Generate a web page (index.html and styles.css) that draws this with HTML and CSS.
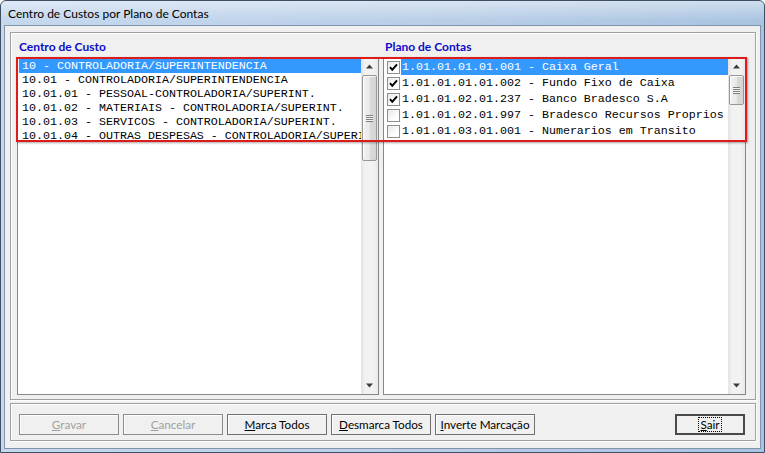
FILE: index.html
```html
<!DOCTYPE html>
<html>
<head>
<meta charset="utf-8">
<title>Centro de Custos por Plano de Contas</title>
<link rel="stylesheet" href="styles.css">
</head>
<body>
<div class="window">
  <div class="titlebar"><span class="title">Centro de Custos por Plano de Contas</span></div>
  <div class="client">
    <div class="group lists">
      <div class="panel">
        <div class="caption">Centro de Custo</div>
        <div class="listbox">
          <ul class="items plain">
            <li><span class="txt sel">10 - CONTROLADORIA/SUPERINTENDENCIA</span></li>
            <li><span class="txt">10.01 - CONTROLADORIA/SUPERINTENDENCIA</span></li>
            <li><span class="txt">10.01.01 - PESSOAL-CONTROLADORIA/SUPERINT.</span></li>
            <li><span class="txt">10.01.02 - MATERIAIS - CONTROLADORIA/SUPERINT.</span></li>
            <li><span class="txt">10.01.03 - SERVICOS - CONTROLADORIA/SUPERINT.</span></li>
            <li><span class="txt">10.01.04 - OUTRAS DESPESAS - CONTROLADORIA/SUPERINT.</span></li>
          </ul>
          <div class="vscroll">
            <div class="arrow"><svg width="17" height="17" viewBox="0 0 17 17"><path d="M5 10.5 L8.5 6.5 L12 10.5 Z" fill="#3c3c3c"/></svg></div>
            <div class="track"><div class="thumb" style="height:86px"><span class="grip"></span></div></div>
            <div class="arrow"><svg width="17" height="17" viewBox="0 0 17 17"><path d="M5 6.5 L8.5 10.5 L12 6.5 Z" fill="#3c3c3c"/></svg></div>
          </div>
        </div>
      </div>
      <div class="panel">
        <div class="caption">Plano de Contas</div>
        <div class="listbox">
          <ul class="items checks">
            <li><span class="cb on"><svg width="11" height="11" viewBox="0 0 11 11"><path d="M2 5.2 L4.3 7.8 L9 2.4" fill="none" stroke="#000" stroke-width="2"/></svg></span><span class="txt sel">1.01.01.01.01.001 - Caixa Geral</span></li>
            <li><span class="cb on"><svg width="11" height="11" viewBox="0 0 11 11"><path d="M2 5.2 L4.3 7.8 L9 2.4" fill="none" stroke="#000" stroke-width="2"/></svg></span><span class="txt">1.01.01.01.01.002 - Fundo Fixo de Caixa</span></li>
            <li><span class="cb on"><svg width="11" height="11" viewBox="0 0 11 11"><path d="M2 5.2 L4.3 7.8 L9 2.4" fill="none" stroke="#000" stroke-width="2"/></svg></span><span class="txt">1.01.01.02.01.237 - Banco Bradesco S.A</span></li>
            <li><span class="cb"></span><span class="txt">1.01.01.02.01.997 - Bradesco Recursos Proprios</span></li>
            <li><span class="cb"></span><span class="txt">1.01.01.03.01.001 - Numerarios em Transito</span></li>
          </ul>
          <div class="vscroll">
            <div class="arrow"><svg width="17" height="17" viewBox="0 0 17 17"><path d="M5 10.5 L8.5 6.5 L12 10.5 Z" fill="#3c3c3c"/></svg></div>
            <div class="track"><div class="thumb" style="height:30px"><span class="grip"></span></div></div>
            <div class="arrow"><svg width="17" height="17" viewBox="0 0 17 17"><path d="M5 6.5 L8.5 10.5 L12 6.5 Z" fill="#3c3c3c"/></svg></div>
          </div>
        </div>
      </div>
    </div>
    <div class="group actions">
      <button class="btn disabled"><u>G</u>ravar</button>
      <button class="btn disabled"><u>C</u>ancelar</button>
      <button class="btn"><u>M</u>arca Todos</button>
      <button class="btn"><u>D</u>esmarca Todos</button>
      <button class="btn"><u>I</u>nverte Marcação</button>
      <button class="btn default"><span class="focus"><u>S</u>air</span></button>
    </div>
  </div>
  <div class="mark"></div>
</div>
</body>
</html>
```
FILE: styles.css
```css
* { box-sizing: border-box; }
html, body { margin: 0; padding: 0; background: #ffffff; }

.window {
  position: relative;
  width: 765px;
  height: 453px;
  border: 1px solid #3f4f63;
  border-radius: 6px 6px 0 0;
  background: linear-gradient(to right, #c5d8ee, #b8cee7 60%, #a9c3e0);
  padding: 0 3px 3px 3px;
  display: flex;
  flex-direction: column;
  font-family: Lato, "Noto Sans", sans-serif;
  overflow: hidden;
}

.titlebar {
  height: 25px;
  margin: 0 -3px;
  padding-left: 7px;
  display: flex;
  align-items: center;
  font-size: 12px;
  color: #000;
  background: linear-gradient(to bottom, rgba(255,255,255,0.45), rgba(255,255,255,0) 85%);
}

.client {
  flex: 1;
  background: #f0f0f0;
  border: 1px solid #8294ab;
  padding: 6px 4px 7px 5px;
  display: flex;
  flex-direction: column;
  gap: 3px;
}

.group {
  border: 1px solid #a0a0a0;
  box-shadow: inset 1px 1px 0 #ffffff, 1px 1px 0 #ffffff;
}

.lists {
  height: 368px;
  padding: 7px 9px 4px 6px;
  display: grid;
  grid-template-columns: 362px 363px;
  column-gap: 4px;
}

.panel { display: flex; flex-direction: column; }

.caption {
  height: 14px;
  line-height: 14px;
  margin-bottom: 3px;
  padding-left: 2px;
  font-weight: bold;
  font-size: 12px;
  color: #0c0cc8;
}

.listbox {
  height: 338px;
  border: 1px solid #828790;
  background: #ffffff;
  display: flex;
}

.items {
  flex: 1;
  min-width: 0;
  list-style: none;
  margin: 0;
  padding: 1px 0 0 1px;
  overflow: hidden;
  font-family: "Liberation Mono", "Courier New", monospace;
  font-size: 11.67px;
  color: #000;
}

.items li { white-space: nowrap; overflow: hidden; }

.plain li { height: 14px; line-height: 14px; }
.plain .txt { display: block; padding-left: 3px; }

.checks li { height: 16px; line-height: 16px; display: flex; align-items: center; }
.checks .txt { flex: 1; padding-left: 1px; overflow: hidden; }

.sel { background: #3399ff; color: #ffffff; }

.cb {
  flex: none;
  width: 13px;
  height: 13px;
  margin: 0 1px 0 2px;
  border: 1px solid #8f8f8f;
  background: linear-gradient(135deg, #e8e8e8, #ffffff 70%);
  display: flex;
  align-items: center;
  justify-content: center;
}
.cb svg { display: block; }

.vscroll {
  flex: none;
  width: 17px;
  display: flex;
  flex-direction: column;
  background: linear-gradient(to right, #e3e3e3, #f2f2f2 25%, #f2f2f2 75%, #e8e8e8);
}
.arrow { height: 17px; flex: none; }
.arrow svg { display: block; }
.track { flex: 1; padding: 0 1px; }
.thumb {
  border: 1px solid #979797;
  border-radius: 2px;
  background: linear-gradient(to right, #f3f3f3, #e8e8e8 50%, #dadada 51%, #d4d4d4);
  box-shadow: inset 1px 1px 0 rgba(255,255,255,0.8);
  display: flex;
  align-items: center;
  justify-content: center;
}
.grip {
  width: 7px;
  height: 7px;
  background: repeating-linear-gradient(to bottom, #7e7e7e 0, #7e7e7e 1px, #f4f4f4 1px, #f4f4f4 2px);
}

.actions {
  height: 38px;
  padding: 10px 10px 5px 8px;
  display: flex;
  gap: 4px;
}

.btn {
  width: 100px;
  height: 21px;
  padding: 0;
  border: 1px solid #707070;
  background: #f0f0f0;
  box-shadow: inset 1px 1px 0 #fcfcfc;
  font-family: Lato, "Noto Sans", sans-serif;
  font-size: 11.7px;
  color: #000;
  line-height: 17px;
}
.btn.disabled { color: #a0a0a0; border-color: #8c8c8c; }
.btn.default {
  width: 70px;
  margin-left: auto;
  border: 2px solid #4a4a4a;
  box-shadow: none;
}
.focus {
  display: inline-block;
  padding: 0 1px;
  outline: 1px dotted #000;
  line-height: 13px;
}

.mark {
  position: absolute;
  left: 15px;
  top: 56px;
  width: 731px;
  height: 85px;
  border: 2px solid #de1b1b;
  box-shadow: 1px 1px 2px rgba(0,0,0,0.35);
  pointer-events: none;
}
```
